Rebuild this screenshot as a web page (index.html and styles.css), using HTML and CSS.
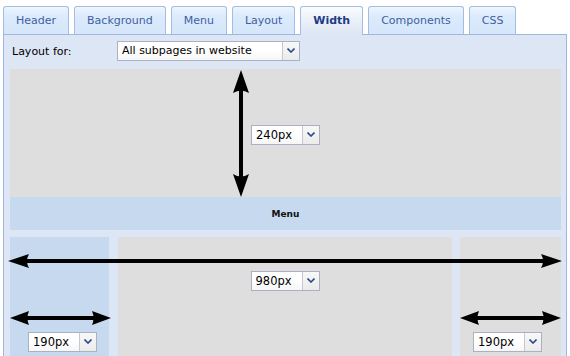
FILE: index.html
```html
<!DOCTYPE html>
<html>
<head>
<meta charset="utf-8">
<link rel="stylesheet" href="styles.css">
</head>
<body>
<div class="tabs">
  <div class="tab">Header</div>
  <div class="tab">Background</div>
  <div class="tab">Menu</div>
  <div class="tab">Layout</div>
  <div class="tab active">Width</div>
  <div class="tab">Components</div>
  <div class="tab">CSS</div>
</div>
<div class="panel">
  <div class="layout-row">
    <span class="label">Layout for:</span>
    <div class="sel sel-wide">
      <span class="sel-val">All subpages in website</span>
      <span class="sel-btn"><svg class="chev" width="8" height="5" viewBox="0 0 8 5"><path d="M0.5 0.5 L4 4 L7.5 0.5" fill="none" stroke="#2b4a8a" stroke-width="1.6"/></svg></span>
    </div>
  </div>
  <div class="header-area">
    <svg class="varrow" width="20" height="130" viewBox="0 0 20 130">
      <line x1="10" y1="18" x2="10" y2="112" stroke="#000" stroke-width="4"/>
      <path d="M10 1 L2 24 Q10 19 18 24 Z" fill="#000"/>
      <path d="M10 128 L2 105 Q10 110 18 105 Z" fill="#000"/>
    </svg>
    <div class="sel">
      <span class="sel-val">240px</span>
      <span class="sel-btn"><svg class="chev" width="8" height="5" viewBox="0 0 8 5"><path d="M0.5 0.5 L4 4 L7.5 0.5" fill="none" stroke="#2b4a8a" stroke-width="1.6"/></svg></span>
    </div>
  </div>
  <div class="menu-bar">Menu</div>
  <div class="cols">
    <svg class="harrow" width="555" height="16" viewBox="0 0 555 16">
      <line x1="16" y1="8" x2="539" y2="8" stroke="#000" stroke-width="4"/>
      <path d="M0 8 L21 1 Q17 8 21 15 Z" fill="#000"/>
      <path d="M554 8 L533 1 Q537 8 533 15 Z" fill="#000"/>
    </svg>
    <div class="col side left">
      <svg class="sarrow" width="102" height="16" viewBox="0 0 102 16">
        <line x1="14" y1="8" x2="88" y2="8" stroke="#000" stroke-width="4"/>
        <path d="M0 8 L19 1 Q16 8 19 15 Z" fill="#000"/>
        <path d="M101 8 L82 1 Q85 8 82 15 Z" fill="#000"/>
      </svg>
      <div class="sel">
        <span class="sel-val">190px</span>
        <span class="sel-btn"><svg class="chev" width="8" height="5" viewBox="0 0 8 5"><path d="M0.5 0.5 L4 4 L7.5 0.5" fill="none" stroke="#2b4a8a" stroke-width="1.6"/></svg></span>
      </div>
    </div>
    <div class="col main">
      <div class="sel">
        <span class="sel-val">980px</span>
        <span class="sel-btn"><svg class="chev" width="8" height="5" viewBox="0 0 8 5"><path d="M0.5 0.5 L4 4 L7.5 0.5" fill="none" stroke="#2b4a8a" stroke-width="1.6"/></svg></span>
      </div>
    </div>
    <div class="col side right">
      <svg class="sarrow" width="102" height="16" viewBox="0 0 102 16">
        <line x1="14" y1="8" x2="88" y2="8" stroke="#000" stroke-width="4"/>
        <path d="M0 8 L19 1 Q16 8 19 15 Z" fill="#000"/>
        <path d="M101 8 L82 1 Q85 8 82 15 Z" fill="#000"/>
      </svg>
      <div class="sel">
        <span class="sel-val">190px</span>
        <span class="sel-btn"><svg class="chev" width="8" height="5" viewBox="0 0 8 5"><path d="M0.5 0.5 L4 4 L7.5 0.5" fill="none" stroke="#2b4a8a" stroke-width="1.6"/></svg></span>
      </div>
    </div>
  </div>
</div>
</body>
</html>
```
FILE: styles.css
```css
html, body {
  margin: 0;
  padding: 0;
  background: #ffffff;
  overflow: hidden;
}
body {
  font-family: "DejaVu Sans", Verdana, sans-serif;
  font-size: 11px;
  color: #000;
  width: 570px;
  height: 356px;
}
.tabs {
  display: flex;
  align-items: flex-end;
  gap: 5px;
  padding: 6px 0 0 3px;
  height: 28px;
  box-sizing: content-box;
  position: relative;
  z-index: 2;
}
.tab {
  height: 27px;
  padding: 0 12px;
  border: 1px solid #a3bde3;
  border-bottom: none;
  border-radius: 3px 3px 0 0;
  background: linear-gradient(#eef5fe 0%, #dbeafc 35%, #d6e7fb 100%);
  color: #3f5f9e;
  line-height: 27px;
  white-space: nowrap;
}
.tab.active {
  height: 28px;
  margin-bottom: -1px;
  background: linear-gradient(#fbfcfe 0%, #edf2fa 40%, #dde6f4 100%);
  color: #1e3c88;
  font-weight: bold;
  line-height: 28px;
}
.panel {
  margin-left: 3px;
  width: 564px;
  box-sizing: border-box;
  border: 1px solid #9fb6e0;
  background: #dde6f4;
  padding: 0 5px 0 6px;
  position: relative;
  z-index: 1;
}
.layout-row {
  display: flex;
  align-items: center;
  padding: 6px 0 8px;
}
.label {
  width: 107px;
  padding-left: 2px;
  box-sizing: border-box;
}
.sel {
  display: flex;
  width: 69px;
  height: 20px;
  box-sizing: border-box;
  border: 1px solid #aab2c2;
  background: #fff;
}
.sel-wide {
  width: 183px;
}
.sel-val {
  flex: 1;
  padding-left: 4px;
  line-height: 18px;
  font-size: 11.5px;
  background: linear-gradient(#ffffff 0%, #ffffff 45%, #f6f6f6 100%);
  white-space: nowrap;
  overflow: hidden;
}
.sel-wide .sel-val {
  font-size: 11px;
}
.sel-btn {
  width: 16px;
  border-left: 1px solid #c3c8d3;
  background: linear-gradient(#f8f8f8, #ebebeb);
  display: flex;
  align-items: center;
  justify-content: center;
}
.chev {
  display: block;
  margin-top: -1px;
}
.header-area {
  position: relative;
  height: 128px;
  background: #dedede;
  display: flex;
  align-items: flex-start;
  padding: 56px 0 0 241px;
  box-sizing: border-box;
}
.varrow {
  position: absolute;
  left: 221px;
  top: 0;
  overflow: visible;
}
.menu-bar {
  height: 33px;
  background: #c6d9ef;
  display: flex;
  align-items: center;
  justify-content: center;
  font-size: 9px;
  font-weight: bold;
  color: #111;
  margin-bottom: 7px;
}
.cols {
  position: relative;
  display: grid;
  grid-template-columns: 99px 334px 101px;
  justify-content: space-between;
  height: 130px;
}
.harrow {
  position: absolute;
  left: -2px;
  top: 16px;
  z-index: 3;
  overflow: visible;
}
.col {
  position: relative;
  display: flex;
  flex-direction: column;
}
.col.main {
  background: #dedede;
  padding: 34px 0 0 133px;
}
.col.side {
  padding-top: 95px;
}
.col.left {
  background: #c6d9ef;
  padding-left: 18px;
}
.col.right {
  background: #dedede;
  padding-left: 13px;
}
.sarrow {
  position: absolute;
  left: 0;
  top: 73px;
  overflow: visible;
}
```
